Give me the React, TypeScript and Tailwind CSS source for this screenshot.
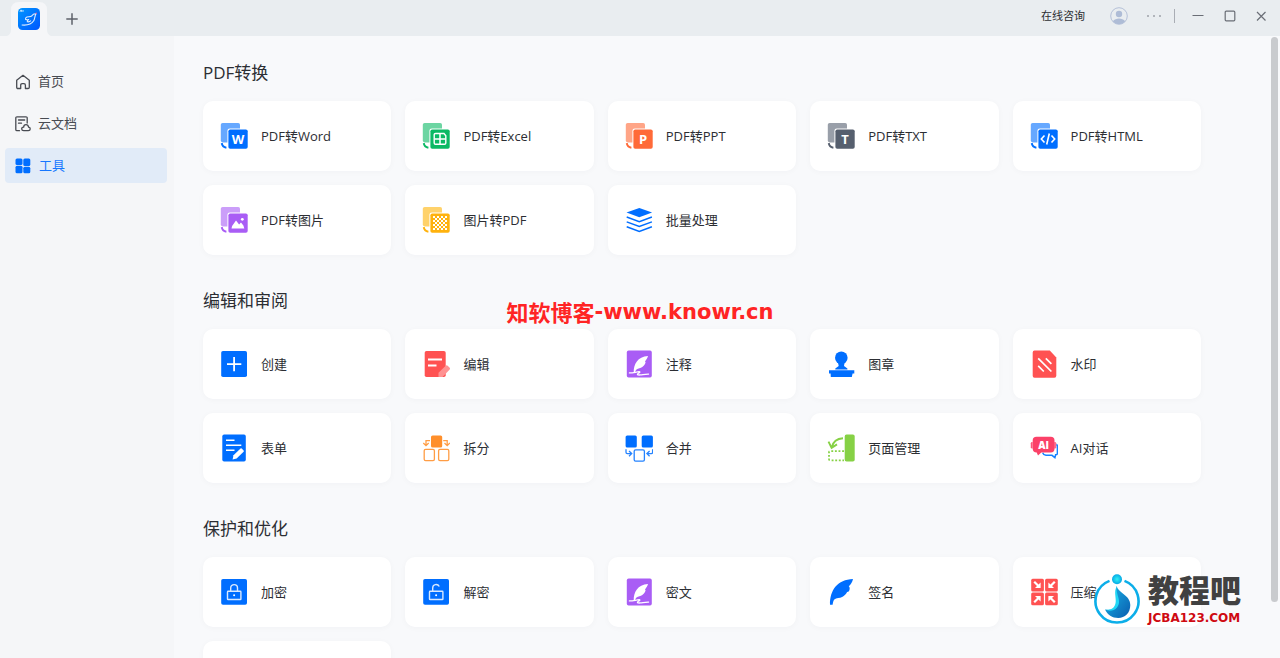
import { useState } from "react";
import type { ReactNode } from "react";

interface Tool {
  label: string;
  icon: ReactNode;
}

interface ToolGroup {
  title: string;
  tools: Tool[];
  hasMore?: boolean;
}

function Icon({ children }: { children: ReactNode }) {
  return (
    <svg viewBox="0 0 28 28" fill="none" className="h-7 w-7 shrink-0" aria-hidden="true">
      {children}
    </svg>
  );
}

/* Two stacked sheets, the front one carries the target format */
function ConvertIcon({ front, back, children }: { front: string; back: string; children: ReactNode }) {
  return (
    <Icon>
      <rect x="0.8" y="1" width="19.2" height="19.4" rx="1.8" fill={back} />
      <path d="M1.8 21.2c.3 2.5 1.7 4.1 4.6 4.500" stroke={front} strokeWidth="2" />
      <rect x="7.4" y="6.4" width="21" height="21" rx="2.4" fill="#fff" />
      <rect x="8.4" y="7.4" width="19.3" height="19.3" rx="1.8" fill={front} />
      {children}
    </Icon>
  );
}

function SheetLetter({ children }: { children: string }) {
  return (
    <text x="18" y="21.7" textAnchor="middle" fill="#fff" className="font-['Open_Sans',sans-serif] text-[13px] font-bold">
      {children}
    </text>
  );
}

function CheckerIcon() {
  const cells: ReactNode[] = [];
  for (let r = 0; r < 7; r++) {
    for (let c = 0; c < 7; c++) {
      if ((r + c) % 2 === 0) {
        cells.push(<rect key={`${r}-${c}`} x={11 + c * 2} y={10 + r * 2} width="2" height="2" rx="0.3" fill="#fff" />);
      }
    }
  }
  return (
    <ConvertIcon front="#ffb20d" back="#ffd26b">
      {cells}
    </ConvertIcon>
  );
}

function QuillIcon() {
  return (
    <Icon>
      <rect x="1.8" y="0.6" width="25" height="27" rx="1.8" fill="#a95df5" />
      <path
        d="M8.7 22.4C8.6 14.5 12.5 6.6 23 6.1c-.6 2-1.5 3.4-3 5.3l.6.9c-.5 2.4-1.7 3.6-3.3 4.6-1.7 1-4 1.3-5.8 2.7-.8.7-1.2 1.6-1.4 2.8z"
        fill="#fff"
      />
      <path d="M4.4 22.9c3.3.1 6.500-.9 9.800-1.200.8 0 .7.7 0 1.100-1 .5-1.800.8-1.800 1.400 0 .8 1.400.9 3 .7 2.800-.3 5.300-.9 8.200-.8" stroke="#fff" strokeWidth="1.3" strokeLinecap="round" />
    </Icon>
  );
}

function LockIcon({ open }: { open?: boolean }) {
  return (
    <Icon>
      <rect x="1.2" y="1" width="25.8" height="25.8" rx="1.8" fill="#006eff" />
      <g stroke="#d9e9ff" strokeWidth="1.4">
        <rect x="7.5" y="13.3" width="13.4" height="8.2" rx="0.6" />
        <path d={open ? "M10.7 13.3V10c0-4 5-4.500 6.600-1.500" : "M10.7 13.3V10a3.400 3.400 0 0 1 6.800 0v3.300"} />
      </g>
      <circle cx="14.1" cy="17.3" r="1" fill="#fff" />
    </Icon>
  );
}

function CompressIcon() {
  return (
    <Icon>
      {[0, 90, 180, 270].map((deg) => (
        <g key={deg} transform={`rotate(${deg} 14.5 14)`}>
          <rect x="1.2" y="0.7" width="12.7" height="12.7" rx="1.5" fill="#ff5252" />
          <path d="M4.2 3.7l4 4" stroke="#fff" strokeWidth="2.2" />
          <path d="M10.600 10.100H5l5.600-5.600z" fill="#fff" />
        </g>
      ))}
    </Icon>
  );
}

const groups: ToolGroup[] = [
  {
    title: "PDF转换",
    tools: [
      { label: "PDF转Word", icon: <ConvertIcon front="#006eff" back="#66a8ff"><SheetLetter>W</SheetLetter></ConvertIcon> },
      {
        label: "PDF转Excel",
        icon: (
          <ConvertIcon front="#0bb964" back="#6cd5a2">
            <path d="M12.2 12.500v8.500q0 1.300 1.300 1.300h9q1.300 0 1.300-1.300v-7.300l-1.800-2.200h-8.500q-1.300 0-1.300 1z" stroke="#fff" strokeWidth="1.4" />
            <path d="M18 12v10M12.500 17h11" stroke="#fff" strokeWidth="1.5" />
          </ConvertIcon>
        ),
      },
      { label: "PDF转PPT", icon: <ConvertIcon front="#ff6a38" back="#ffa587"><SheetLetter>P</SheetLetter></ConvertIcon> },
      { label: "PDF转TXT", icon: <ConvertIcon front="#565f6e" back="#999fa9"><SheetLetter>T</SheetLetter></ConvertIcon> },
      {
        label: "PDF转HTML",
        icon: (
          <ConvertIcon front="#006eff" back="#66a8ff">
            <path d="M14.5 13.500L11.300 17l3.200 3.500M21.500 13.500l3.200 3.500-3.200 3.500M19.300 11.500l-2.600 11" stroke="#fff" strokeWidth="1.6" />
          </ConvertIcon>
        ),
      },
      {
        label: "PDF转图片",
        icon: (
          <ConvertIcon front="#a95df5" back="#cb9ef9">
            <path d="M11.500 22.500l.6-2.600 3.900-5.400 3.100 4 1.900-2 2.400 2.900.9 3.100z" fill="#fff" />
            <circle cx="22.3" cy="13.3" r="1.4" fill="#fff" />
          </ConvertIcon>
        ),
      },
      { label: "图片转PDF", icon: <CheckerIcon /> },
      {
        label: "批量处理",
        icon: (
          <Icon>
            <path d="M14.300 2l12.800 4.600-12.800 4.700L1.500 6.600z" fill="#006eff" />
            <path d="M1.700 11l12.600 4.600L26.900 11M1.700 15.900l12.600 4.600 12.600-4.600M1.700 20.800l12.600 4.600 12.600-4.600" stroke="#006eff" strokeWidth="1.5" />
          </Icon>
        ),
      },
    ],
  },
  {
    title: "编辑和审阅",
    tools: [
      {
        label: "创建",
        icon: (
          <Icon>
            <rect x="1.2" y="1" width="25.8" height="26" rx="1.8" fill="#006eff" />
            <path d="M14.100 7v14.200M7 14.100h14.300" stroke="#fff" strokeWidth="1.8" />
          </Icon>
        ),
      },
      {
        label: "编辑",
        icon: (
          <Icon>
            <rect x="2.7" y="1" width="21" height="26" rx="1.8" fill="#ff5252" />
            <path d="M6 9.500h14M6 15.500h8.500" stroke="#fff" strokeWidth="1.8" />
            <path d="M16.500 27v-4.200l7.200-7q1-.9 2 0l2 2q.8.900 0 1.700L20.500 27z" fill="#ff9292" />
          </Icon>
        ),
      },
      { label: "注释", icon: <QuillIcon /> },
      {
        label: "图章",
        icon: (
          <Icon>
            <circle cx="14.3" cy="7.8" r="6.3" fill="#006eff" />
            <path d="M11 12.500h6.600l-.6 3.500 3.400 2.500V19.500H8.300v-1l3.400-2.500z" fill="#006eff" />
            <path d="M2 20.200h25.300v3.300h-1.700L24.800 27h-21L3.600 23.500H2z" fill="#006eff" />
          </Icon>
        ),
      },
      {
        label: "水印",
        icon: (
          <Icon>
            <path d="M4.500.5h15.300l6.500 7v18.300q0 1.900-1.900 1.900H4.500q-1.800 0-1.800-1.900V2.400Q2.700.5 4.500.5z" fill="#ff5252" />
            <path d="M8.200 8.300l13.200 13.200M15.800 8.300l5.600 5.600M8.200 15.900l5.600 5.600" stroke="#fff" strokeWidth="1.7" />
          </Icon>
        ),
      },
      {
        label: "表单",
        icon: (
          <Icon>
            <rect x="2.3" y="0.6" width="23.5" height="26.9" rx="1.8" fill="#006eff" />
            <path d="M6 6.200h8.500M6 11.200h15.300M6 16.200h8.500" stroke="#fff" strokeWidth="1.6" />
            <path d="M12.600 25.400l.9-4.100 7-6.700q.6-.5 1.200 0l1.900 1.900q.5.600 0 1.200l-7 6.700z" fill="#fff" />
          </Icon>
        ),
      },
      {
        label: "拆分",
        icon: (
          <Icon>
            <rect x="9" y="1.5" width="11.2" height="12" rx="1.6" fill="#ff8f2b" />
            <g stroke="#ff9d45" strokeWidth="1.3">
              <rect x="2.2" y="15.3" width="10.2" height="11.3" rx="1.4" />
              <rect x="16.6" y="15.3" width="10.2" height="11.3" rx="1.4" />
              <path d="M8 6.600H4v4.800M1.300 9l2.700 2.600L6.700 9M21.200 6.600h4v4.800M22.500 9l2.700 2.600L27.900 9" />
            </g>
          </Icon>
        ),
      },
      {
        label: "合并",
        icon: (
          <Icon>
            <rect x="0.6" y="1.5" width="11.2" height="12" rx="1.6" fill="#006eff" />
            <rect x="16.7" y="1.5" width="11.2" height="12" rx="1.6" fill="#006eff" />
            <g stroke="#2583ff" strokeWidth="1.3">
              <rect x="9.2" y="15.9" width="10.2" height="11.3" rx="1.4" />
              <path d="M1 15.300v3q0 1.300 1.300 1.300H6.500M4 17l2.700 2.600L4 22.300M27.600 15.300v3q0 1.300-1.300 1.300h-4.200M24.600 17l-2.700 2.600 2.700 2.700" />
            </g>
          </Icon>
        ),
      },
      {
        label: "页面管理",
        icon: (
          <Icon>
            <rect x="17.7" y="0.6" width="10" height="26.9" rx="1.8" fill="#86d145" />
            <path d="M17 17.200H3.300q-1.300 0-1.300 1.300v6.500q0 1.300 1.300 1.300H17" stroke="#86d145" strokeWidth="1.8" strokeDasharray="1.9 1.700" />
            <path d="M16 4.300C9.500 4.600 6 8 4.700 13.500M1.500 7.600l3.100 6.200 5.400-3.400" stroke="#86d145" strokeWidth="1.9" />
          </Icon>
        ),
      },
      {
        label: "AI对话",
        icon: (
          <Icon>
            <path d="M26.300 10.500q1.100.4 1.100 1.900v6.800q0 1.600-1.800 1.600l-.7 2.800-2.900-2.300h-6q-2.600-.2-3.300-2.500" stroke="#1681ff" strokeWidth="1.500" />
            <rect x="0.8" y="8" width="25.4" height="6.5" rx="1.3" fill="#fb4168" />
            <path d="M2.300 7.500v8M24.900 7.500v8" stroke="#fff" strokeWidth="0.6" />
            <path d="M6.500 2.800h14.300q3.700 0 3.700 3.700v8.300q0 3.700-3.700 3.700H11.300l-3.300 2.900-1.300-2.900q-4-.2-4-3.700V6.500q0-3.700 3.800-3.700z" fill="#fb4168" />
            <text x="13.7" y="14.5" textAnchor="middle" fill="#fff" className="font-['Open_Sans',sans-serif] text-[10px] font-extrabold">AI</text>
          </Icon>
        ),
      },
    ],
  },
  {
    title: "保护和优化",
    hasMore: true,
    tools: [
      { label: "加密", icon: <LockIcon /> },
      { label: "解密", icon: <LockIcon open /> },
      { label: "密文", icon: <QuillIcon /> },
      {
        label: "签名",
        icon: (
          <Icon>
            <path
              d="M3 26.800C2.800 12 10.500 1.600 26 1c-.7 3.100-2 5.300-4.200 7.300l.7 1c.4 1.400.2 2.800-.8 4.200l-1.600.4c-1 2-2.600 3.700-5 5.100-2.300 1.300-5.700.8-7.800 2.600-1 1.200-1.300 3-1.700 5.200z"
              fill="#006eff"
            />
          </Icon>
        ),
      },
      { label: "压缩", icon: <CompressIcon /> },
    ],
  },
];

const navItems = [
  {
    label: "首页",
    icon: (
      <path d="M1.700 6.200L8 1.300l6.300 4.900v7q0 1.300-1.300 1.300h-2.600v-3.300q0-1.500-1.500-1.500H7.200q-1.500 0-1.500 1.500v3.300H3q-1.300 0-1.300-1.300z" stroke="#484b52" strokeWidth="1.3" strokeLinejoin="round" />
    ),
  },
  {
    label: "云文档",
    icon: (
      <g stroke="#484b52" strokeWidth="1.3" strokeLinecap="round">
        <path d="M12.200 7V2q0-1.200-1.200-1.200H2Q.8.800.8 2v11.500q0 1.200 1.200 1.200h2.500M3.500 4h6.200M3.500 7.200h3" />
        <path d="M8.700 14.600h4.600c2.500 0 2.500-3.300.3-3.500-.6-3.300-4.700-3.200-5 0-2.700.2-2.400 3.500.1 3.500z" />
      </g>
    ),
  },
  {
    label: "工具",
    icon: (
      <g fill="#006eff">
        <rect x="0.5" y="0.5" width="7" height="6.5" rx="1.5" />
        <rect x="8.3" y="0.5" width="7" height="7.5" rx="1.5" />
        <rect x="0.5" y="7.8" width="7" height="7.4" rx="1.5" />
        <rect x="8.3" y="8.8" width="7" height="6.4" rx="1.5" />
      </g>
    ),
  },
];

function TitleBar() {
  return (
    <header className="flex h-9 shrink-0 items-start bg-[#e9edf0]">
      <button type="button" aria-label="PDF" className="relative ml-[7px] mt-0.5 flex h-[34px] w-11 justify-center pt-1.5">
        <svg viewBox="0 0 44 34" className="absolute inset-0 h-full w-full" aria-hidden="true">
          <path d="M0 34q4-2 4-6V8q0-8 8-8h20q8 0 8 8v20q0 4 4 6z" fill="#f5f6f8" />
        </svg>
        <svg viewBox="0 0 22 22" fill="none" className="relative h-[22px] w-[22px]" aria-hidden="true">
          <defs>
            <linearGradient id="brand" x1="0" y1="0" x2="1" y2="1">
              <stop offset="0" stopColor="#0096ff" />
              <stop offset="1" stopColor="#0056ff" />
            </linearGradient>
          </defs>
          <rect width="22" height="22" rx="4.5" fill="url(#brand)" />
          <path d="M2 3.800l.8-1.600h.6l.3 1.600M5 2v1.800" stroke="#fff" strokeWidth="0.8" />
          <path d="M3.700 17c5.500.6 9.700-.6 12-4.200 1.300-2.100.9-4.700 2.300-7-2.200-.3-3.200.6-4.300 2.200-1.400 1-3.200.5-4.800 1-1.300.6-1.600 1.500-1.400 2.300.8.600 2 .5 3.200.2-1.100.7-1.600 1.500-1.400 2.300 1.200.3 2.500 0 3.700-1.200" stroke="#dcecff" strokeWidth="1.1" strokeLinejoin="round" />
          <circle cx="18.2" cy="5.3" r="0.7" fill="#f0508c" />
        </svg>
      </button>
      <button type="button" aria-label="新建标签页" className="ml-[15px] mt-[13px]">
        <svg viewBox="0 0 12 12" className="h-3 w-3" aria-hidden="true">
          <path d="M6 .3v11.400M.3 6h11.400" stroke="#5d616a" strokeWidth="1.5" />
        </svg>
      </button>
      <div className="ml-auto flex h-8 items-center pr-[13px] text-[#6a6e76]">
        <button type="button" className="text-[11px] text-[#2c2e33]">在线咨询</button>
        <button type="button" aria-label="账户" className="ml-[25px]">
          <svg viewBox="0 0 18 18" fill="none" className="h-[18px] w-[18px]" aria-hidden="true">
            <circle cx="9" cy="9" r="8.3" stroke="#b4c0d8" />
            <circle cx="9" cy="7" r="3.2" fill="#aebcd6" />
            <path d="M2.800 14.200c3-3.600 9.400-3.600 12.400 0C12 18 6 18 2.800 14.200z" fill="#aebcd6" />
          </svg>
        </button>
        <button type="button" aria-label="更多" className="ml-[18px]">
          <svg viewBox="0 0 16 4" fill="currentColor" className="h-1 w-4" aria-hidden="true">
            <circle cx="2" cy="2" r="0.8" />
            <circle cx="8" cy="2" r="0.8" />
            <circle cx="14" cy="2" r="0.8" />
          </svg>
        </button>
        <span className="ml-3 h-3.5 w-px bg-[#a9adb4]" />
        <button type="button" aria-label="最小化" className="ml-[17px]">
          <svg viewBox="0 0 12 12" className="h-3 w-3" aria-hidden="true">
            <path d="M.5 5.500h11" stroke="currentColor" />
          </svg>
        </button>
        <button type="button" aria-label="最大化" className="ml-5">
          <svg viewBox="0 0 12 12" className="h-3 w-3" aria-hidden="true">
            <rect x="1.2" y="1.2" width="9.6" height="9.6" rx="1" fill="none" stroke="currentColor" strokeWidth="1.2" />
          </svg>
        </button>
        <button type="button" aria-label="关闭" className="ml-[19px]">
          <svg viewBox="0 0 12 12" className="h-3 w-3" aria-hidden="true">
            <path d="M2 2l8.500 8.500M10.500 2L2 10.500" stroke="currentColor" strokeWidth="1.2" />
          </svg>
        </button>
      </div>
    </header>
  );
}

function SiteBadge() {
  return (
    <div className="pointer-events-none absolute bottom-[34px] right-[39px] flex items-center gap-2">
      <svg viewBox="0 0 46 50" fill="none" className="h-[50px] w-[46px]" aria-hidden="true">
        <defs>
          <linearGradient id="drop" x1="0" y1="0" x2="1" y2="1">
            <stop offset="0" stopColor="#1ab8ea" />
            <stop offset="1" stopColor="#0a5cae" />
          </linearGradient>
          <radialGradient id="ball">
            <stop offset="0" stopColor="#2ff0f5" />
            <stop offset="1" stopColor="#06a9e6" />
          </radialGradient>
        </defs>
        <path d="M30.500 6.900a21.500 21.500 0 1 1-15 0" stroke="#0caee9" strokeWidth="2.6" />
        <circle cx="23" cy="5.2" r="5" fill="url(#ball)" />
        <path d="M22.700 12c1.500 7 13.600 9 13.600 19 0 8-5.500 13-12 13-6 0-11-3.500-13.300-8.500 6.500 1.500 10.500-1 11.700-6.500.8-5-2.500-10 0-17z" fill="url(#drop)" />
        <path d="M22.700 12c-3 7-.5 11-1 16-.6 5.500-4 8.500-10.700 7.500 4 2 9 1.500 12-2 5.500-7-1.500-12-.3-21.500z" fill="#21d7f5" />
      </svg>
      <div className="flex flex-col items-start gap-1.5">
        <span className="text-[31px] font-black leading-8 text-[#414141]">教程吧</span>
        <span className="font-['DejaVu_Sans',sans-serif] text-[12px] font-bold leading-3 text-[#cf0a12]">JCBA123.COM</span>
      </div>
    </div>
  );
}

export default function App() {
  const [active, setActive] = useState("工具");

  return (
    <div className="relative flex h-screen flex-col overflow-hidden bg-[#f8f9fb] font-['Open_Sans','Noto_Sans_CJK_SC',sans-serif] text-[#2c2e33]">
      <TitleBar />
      <div className="flex min-h-0 flex-1">
        <nav className="flex w-[174px] shrink-0 flex-col gap-[7px] bg-[#f5f6f8] pl-[5px] pr-[7px] pt-7">
          {navItems.map((item) => (
            <button
              key={item.label}
              type="button"
              onClick={() => setActive(item.label)}
              className={
                active === item.label
                  ? "flex h-[35px] items-center gap-2 rounded bg-[#e1ebf8] px-2.5 text-[13px] text-[#1677ff]"
                  : "flex h-[35px] items-center gap-[7px] rounded px-2.5 text-[13px] text-[#484b52]"
              }
            >
              <svg viewBox="0 0 16 16" fill="none" className="h-4 w-4" aria-hidden="true">
                {item.icon}
              </svg>
              {item.label}
            </button>
          ))}
        </nav>

        <main className="flex min-w-0 flex-1 flex-col gap-[33px] overflow-y-auto pl-[29px] pr-[70px] pt-6 [scrollbar-width:none]">
          {groups.map((group) => (
            <section key={group.title}>
              <h2 className="mb-4 pt-px text-[17px] leading-6">{group.title}</h2>
              <div className="grid grid-cols-5 gap-3.5">
                {group.tools.map((tool) => (
                  <button
                    key={tool.label}
                    type="button"
                    className="flex h-[70px] items-center gap-[13px] rounded-[10px] bg-white pl-[17px] text-[13px] shadow-[0_1px_6px_rgba(30,40,60,0.03)]"
                  >
                    {tool.icon}
                    <span className="pt-0.5">{tool.label}</span>
                  </button>
                ))}
                {group.hasMore && <div className="h-[70px] rounded-[10px] bg-white shadow-[0_1px_6px_rgba(30,40,60,0.03)]" />}
              </div>
            </section>
          ))}
        </main>

        {/* Scroll position */}
        <div className="w-[9px] shrink-0 pr-0.5 pt-px">
          <div className="h-[91%] rounded bg-[#c9cbce]" />
        </div>
      </div>

      <p className="pointer-events-none absolute left-1/2 top-[298px] flex -translate-x-1/2 items-center whitespace-nowrap text-[22px] font-bold leading-7 text-[#ff2424]">
        知软博客
        <span className="font-['DejaVu_Sans',sans-serif] text-[21px]">-www.knowr.cn</span>
      </p>
      <SiteBadge />
    </div>
  );
}
